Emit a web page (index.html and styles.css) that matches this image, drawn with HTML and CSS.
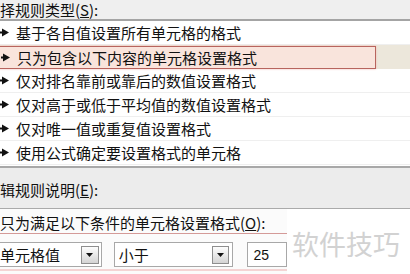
FILE: index.html
```html
<!DOCTYPE html>
<html lang="zh-CN">
<head>
  <meta charset="UTF-8">
  <meta name="viewport" content="width=device-width, initial-scale=1.0">
  <title>新建格式规则</title>
  <link rel="stylesheet" href="styles.css">
</head>
<body>
  <div class="dialog">
    <div class="section-title">择规则类型(<u>S</u>):</div>
    <ul class="rule-list">
      <li><svg class="arrow" viewBox="0 0 10 9"><polygon points="0,3.5 2,3.5 2,0.5 9,4.5 2,8.5 2,5.5 0,5.5"/></svg><span>基于各自值设置所有单元格的格式</span></li>
      <li class="selected"><div class="sel-box"><svg class="arrow" viewBox="0 0 10 9"><polygon points="0,3.5 2,3.5 2,0.5 9,4.5 2,8.5 2,5.5 0,5.5"/></svg><span>只为包含以下内容的单元格设置格式</span></div></li>
      <li><svg class="arrow" viewBox="0 0 10 9"><polygon points="0,3.5 2,3.5 2,0.5 9,4.5 2,8.5 2,5.5 0,5.5"/></svg><span>仅对排名靠前或靠后的数值设置格式</span></li>
      <li><svg class="arrow" viewBox="0 0 10 9"><polygon points="0,3.5 2,3.5 2,0.5 9,4.5 2,8.5 2,5.5 0,5.5"/></svg><span>仅对高于或低于平均值的数值设置格式</span></li>
      <li><svg class="arrow" viewBox="0 0 10 9"><polygon points="0,3.5 2,3.5 2,0.5 9,4.5 2,8.5 2,5.5 0,5.5"/></svg><span>仅对唯一值或重复值设置格式</span></li>
      <li><svg class="arrow" viewBox="0 0 10 9"><polygon points="0,3.5 2,3.5 2,0.5 9,4.5 2,8.5 2,5.5 0,5.5"/></svg><span>使用公式确定要设置格式的单元格</span></li>
    </ul>
    <div class="section-title mid">辑规则说明(<u>E</u>):</div>
    <div class="edit-area">
      <div class="cond-label">只为满足以下条件的单元格设置格式(<u>O</u>):</div>
      <div class="cond-row">
        <div class="combo combo-type"><span>单元格值</span><span class="drop"><svg viewBox="0 0 7 4"><polygon points="0,0 7,0 3.5,4"/></svg></span></div>
        <div class="combo combo-op"><span>小于</span><span class="drop"><svg viewBox="0 0 7 4"><polygon points="0,0 7,0 3.5,4"/></svg></span></div>
        <div class="field">25</div>
      </div>
      <div class="watermark">软件技巧</div>
    </div>
  </div>
</body>
</html>
```

FILE: styles.css
```css
body {
  margin: 0;
  font-family: "Noto Sans CJK SC", sans-serif;
  font-size: 15px;
  color: #111;
  background-color: #fbfbfb;
}
.dialog {
  width: 410px;
  height: 274px;
  overflow: hidden;
}
.section-title {
  height: 19px;
  line-height: 19px;
  background-color: #efefef;
  white-space: nowrap;
}
.section-title u {
  text-underline-offset: 1px;
}
.section-title.mid {
  height: 40px;
  line-height: 44px;
  background-color: #ececec;
  border-bottom: 1px solid #aaa;
}
.rule-list {
  list-style: none;
  margin: 0;
  padding: 0 0 1px 0;
  background-color: #fff;
  border-top: 2px solid #a4a4a4;
  border-bottom: 2px solid #a8a8a8;
}
.rule-list li {
  display: flex;
  align-items: center;
  height: 23px;
  border-bottom: 1px solid #efefef;
  white-space: nowrap;
}
.rule-list .arrow {
  width: 10px;
  height: 9px;
  flex: none;
  fill: #111;
}
.rule-list li span {
  margin-left: 6px;
}
.rule-list li.selected {
  background-color: #ece7db;
  border-bottom-color: #ece7db;
}
.sel-box {
  display: flex;
  align-items: center;
  width: 377px;
  height: 23px;
  margin-left: -1px;
  margin-top: 1px;
  padding-left: 1px;
  box-sizing: border-box;
  border: 1px solid #b8645e;
  background-color: #f9e4dc;
  box-shadow: 0 0 2px #f2b8b0;
}
.sel-box span {
  margin-left: 5px;
}
.edit-area {
  position: relative;
  height: 65px;
  background-color: #fbfbfb;
}
.cond-label {
  width: 287px;
  padding-top: 3px;
  line-height: 21px;
  border-bottom: 1px solid #d49a98;
  white-space: nowrap;
}
.cond-row {
  display: flex;
  width: 287px;
  margin-top: 8px;
  padding-bottom: 2px;
  border-bottom: 2px solid #f4d4d4;
}
.combo, .field {
  display: flex;
  align-items: center;
  justify-content: space-between;
  height: 25px;
  box-sizing: border-box;
  border: 1px solid #a8a8a8;
  background-color: #fff;
}
.combo-type {
  width: 106px;
  margin-left: -3px;
  padding-left: 2px;
  padding-right: 2px;
}
.combo-op {
  width: 121px;
  margin-left: 12px;
  padding-left: 4px;
  padding-right: 3px;
}
.drop {
  display: flex;
  align-items: center;
  justify-content: center;
  width: 18px;
  height: 18px;
  box-sizing: border-box;
  border: 1px solid #8e8e8e;
  background: linear-gradient(#fdfdfd, #d4d4d4);
}
.drop svg {
  width: 7px;
  height: 4px;
  fill: #111;
}
.combo-op .drop {
  width: 17px;
}
.field {
  width: 40px;
  margin-left: 14px;
  padding-left: 5px;
  font-family: "Liberation Sans", Arial, sans-serif;
  font-size: 14px;
}
.watermark {
  position: absolute;
  left: 287px;
  top: 0;
  width: 123px;
  height: 65px;
  box-sizing: border-box;
  padding: 20px 0 0 5px;
  background-color: #fff;
  color: #d2d2d2;
  font-size: 27px;
  line-height: 29px;
  white-space: nowrap;
}
```
